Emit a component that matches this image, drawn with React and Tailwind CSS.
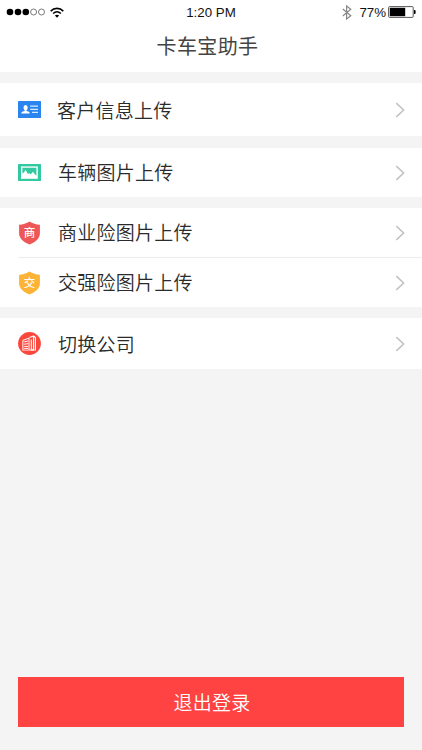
const IdCardIcon = () => (
  <svg width="23" height="17" viewBox="0 0 23 17">
    <rect width="23" height="17" rx="0.5" fill="#2a86ee" />
    <ellipse cx="7.6" cy="6.7" rx="2.1" ry="2.6" fill="#fff" />
    <path d="M6.7 8.5h1.8v1.4l2.4.9c.5.2.7.6.7 1.2v.6H3.4V12c0-.6.2-1 .7-1.2l2.6-.9z" fill="#fff" />
    <path d="M12.2 5.2H20M12.2 8.3H20M14 11.4h6" stroke="#d8e9ff" strokeWidth="1.2" />
  </svg>
);

const PhotoIcon = () => (
  <svg width="23" height="17" viewBox="0 0 23 17">
    <rect width="23" height="17" rx="0.5" fill="#33c9a0" />
    <rect x="3" y="2.4" width="16.8" height="12.4" fill="#fff" />
    <path d="M4.4 3.8h14v8l-1.3-1.2-2.2-2.8-2 2.4-1.6-1-1.4.8-2.3-4-1.7 2.4-1.5 1.2z" fill="#33c9a0" />
  </svg>
);

const ShieldIcon = ({ color, label }) => (
  <svg width="23" height="24" viewBox="0 0 23 24">
    <path
      d="M11.5.6C8.6 2.7 5 3.6 1.1 3.8v8.4c0 5.2 4.4 8.8 10.4 11.2 6-2.4 10.4-6 10.4-11.2V3.8C18 3.6 14.4 2.7 11.5.6z"
      fill={color}
    />
    <text x="11.6" y="15.7" textAnchor="middle" className="font-['Noto_Sans_CJK_SC',sans-serif] text-[11.5px] font-medium" fill="#fff">
      {label}
    </text>
  </svg>
);

const CompanyIcon = () => (
  <svg width="23" height="23" viewBox="0 0 23 23">
    <circle cx="11.5" cy="11.5" r="11.4" fill="#fa463b" />
    <path d="M4.9 17.9V8.4l6.1-2.3v11.8" fill="none" stroke="#fff" strokeWidth="1" />
    <path d="M6.2 9.9l3.8-.9M6.2 12.2l3.8-.5M6.2 14.4H10M6.2 16.4H10" stroke="#fff" strokeWidth="1" />
    <path d="M11.4 5.6l4.1-1.5v13.8h-2.2V7.4" fill="none" stroke="#fff" strokeWidth="1.1" />
    <path d="M15.6 4.4l1.8.9v12.6" fill="none" stroke="#fff" strokeWidth="1.2" />
    <path d="M4.3 18.1h13.6" stroke="#fff" strokeWidth="0.8" />
  </svg>
);

const Chevron = () => (
  <svg className="ml-auto mr-[17px]" width="10" height="16" viewBox="0 0 10 16">
    <path d="M1.3 1.2L8.6 8l-7.3 6.8" fill="none" stroke="#c3c3c6" strokeWidth="1.6" />
  </svg>
);

const groups = [
  {
    className: "mb-px h-[53px]",
    items: [{ icon: <IdCardIcon />, label: "客户信息上传", textClass: "ml-4" }],
  },
  {
    className: "h-[49px]",
    items: [{ icon: <PhotoIcon />, label: "车辆图片上传", textClass: "ml-[17px] pb-0.5" }],
  },
  {
    className: "h-[99px]",
    items: [
      { icon: <ShieldIcon color="#ee5657" label="商" />, label: "商业险图片上传", textClass: "ml-[17px] pb-0.5" },
      { icon: <ShieldIcon color="#fcb336" label="交" />, label: "交强险图片上传", textClass: "ml-[17px] pb-0.5" },
    ],
  },
  {
    className: "h-[51px]",
    items: [{ icon: <CompanyIcon />, label: "切换公司", textClass: "ml-[17px] pb-px" }],
  },
];

function StatusBar() {
  return (
    <div className="grid h-6 grid-cols-3 items-center font-['Liberation_Sans',sans-serif] text-[13.3px] text-[#111]">
      <div className="flex items-center pl-[6px]">
        <svg width="40" height="8" viewBox="0 0 40 8">
          <circle cx="4" cy="4" r="3.3" fill="#000" />
          <circle cx="12" cy="4" r="3.3" fill="#000" />
          <circle cx="19.8" cy="4" r="3.3" fill="#000" />
          <circle cx="27.6" cy="4" r="3" fill="none" stroke="#444" strokeWidth="0.7" />
          <circle cx="35.5" cy="4" r="3" fill="none" stroke="#444" strokeWidth="0.7" />
        </svg>
        <svg className="ml-1" width="14" height="11" viewBox="0 0 14 11" fill="none" stroke="#000" strokeWidth="1.6">
          <path d="M.7 4.1C4.3.5 9.7.5 13.3 4.1" />
          <path d="M3.1 6.5c2.3-2.1 5.5-2.1 7.8 0" />
          <path d="M7 10.7L4.9 8.6c1.2-1.1 3-1.1 4.2 0z" fill="#000" stroke="none" />
        </svg>
      </div>
      <span className="pt-px text-center">1:20 PM</span>
      <div className="flex items-center justify-end pr-[5px]">
        <svg className="mr-[7px]" width="10" height="15" viewBox="0 0 10 15" fill="none" stroke="#888" strokeWidth="1.2">
          <path d="M.8 4l8 6.8-4.2 3.2V1l4.2 3.2-8 6.8" />
        </svg>
        <span className="pt-px">77%</span>
        <svg className="ml-[2px]" width="29" height="12" viewBox="0 0 29 12">
          <rect x="0.6" y="0.6" width="24.6" height="10.8" rx="1" fill="#fff" stroke="#444" strokeWidth="0.9" />
          <rect x="1.8" y="1.8" width="15.4" height="8.4" fill="#000" />
          <path d="M26 4h.6a1 1 0 011 1v2a1 1 0 01-1 1H26z" fill="#000" />
        </svg>
      </div>
    </div>
  );
}

export default function App() {
  return (
    <div className="flex h-[750px] w-[422px] flex-col bg-[#f4f4f4] font-['Noto_Sans_CJK_SC',sans-serif] text-[#2b2b2b]">
      <header className="h-[72px] bg-white">
        <StatusBar />
        <h1 className="pr-[7px] text-center text-[20px] leading-[44px] tracking-[0.4px] text-[#444]">卡车宝助手</h1>
      </header>

      {/* Menu */}
      <main className="mt-[11px] flex flex-col gap-[11px]">
        {groups.map((group, i) => (
          <section key={i} className={`flex flex-col bg-white ${group.className}`}>
            {group.items.map((item, j) => (
              <div
                key={item.label}
                className={`ml-[18px] flex flex-1 items-center ${j > 0 ? "border-t border-[#ececf0]" : ""}`}
              >
                {item.icon}
                <span className={`text-[19px] leading-none font-[350] tracking-[0.25px] ${item.textClass}`}>
                  {item.label}
                </span>
                <Chevron />
              </div>
            ))}
          </section>
        ))}
      </main>

      <button className="mx-[18px] mt-auto mb-[23px] h-[50px] bg-[#ff4242] pb-0.5 pl-[2px] text-[19px] leading-none font-[350] tracking-[0.25px] text-white">
        退出登录
      </button>
    </div>
  );
}
